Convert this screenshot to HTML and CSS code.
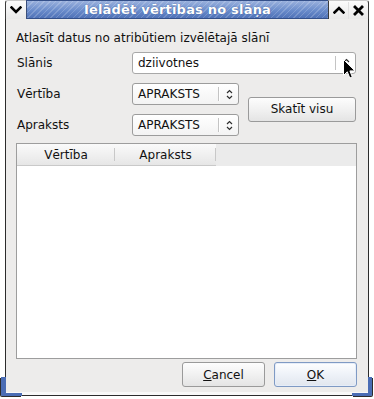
FILE: index.html
```html
<!DOCTYPE html>
<html>
<head>
<meta charset="utf-8">
<link rel="stylesheet" href="styles.css">
</head>
<body>
<div class="screen">
  <div class="window">
    <div class="titlebar">
      <div class="tb-box tb-left">
        <svg width="12" height="8" viewBox="0 0 12 8"><path d="M1.5 1.5 L6 6 L10.5 1.5" fill="none" stroke="#000" stroke-width="2.6" stroke-linecap="square"/></svg>
      </div>
      <div class="tb-title"><span>Ielādēt vērtības no slāņa</span></div>
      <div class="tb-box tb-right">
        <span class="tb-icon"><svg width="12" height="8" viewBox="0 0 12 8"><path d="M1.5 6.5 L6 2 L10.5 6.5" fill="none" stroke="#000" stroke-width="2.6" stroke-linecap="square"/></svg></span>
        <span class="tb-icon"><svg width="11" height="11" viewBox="0 0 11 11"><path d="M2 2 L9 9 M9 2 L2 9" fill="none" stroke="#000" stroke-width="2.8" stroke-linecap="square"/></svg></span>
      </div>
    </div>
    <div class="client">
      <p class="intro">Atlasīt datus no atribūtiem izvēlētajā slānī</p>
      <div class="form">
        <span class="label r1">Slānis</span>
        <div class="combo wide r1">
          <span class="combo-text">dziivotnes</span>
          <span class="combo-sep"></span>
          <span class="combo-arrow"><svg width="7" height="11" viewBox="0 0 7 11"><path d="M1 4 L3.5 1.5 L6 4 M1 7 L3.5 9.5 L6 7" fill="none" stroke="#2e2e2e" stroke-width="1.2"/></svg></span>
        </div>
        <span class="label r2">Vērtība</span>
        <div class="combo r2">
          <span class="combo-text">APRAKSTS</span>
          <span class="combo-sep"></span>
          <span class="combo-arrow"><svg width="7" height="11" viewBox="0 0 7 11"><path d="M1 4 L3.5 1.5 L6 4 M1 7 L3.5 9.5 L6 7" fill="none" stroke="#2e2e2e" stroke-width="1.2"/></svg></span>
        </div>
        <button class="btn show-all">Skatīt visu</button>
        <span class="label r3">Apraksts</span>
        <div class="combo r3">
          <span class="combo-text">APRAKSTS</span>
          <span class="combo-sep"></span>
          <span class="combo-arrow"><svg width="7" height="11" viewBox="0 0 7 11"><path d="M1 4 L3.5 1.5 L6 4 M1 7 L3.5 9.5 L6 7" fill="none" stroke="#2e2e2e" stroke-width="1.2"/></svg></span>
        </div>
      </div>
      <div class="tree">
        <div class="tree-head">
          <div class="col c1">Vērtība</div>
          <div class="col c2">Apraksts</div>
          <div class="col-rest"></div>
        </div>
        <div class="tree-body"></div>
      </div>
      <div class="actions">
        <button class="btn action"><u>C</u>ancel</button>
        <button class="btn action default"><u>O</u>K</button>
      </div>
    </div>
    <div class="frame-bottom"></div>
  </div>
  <span class="corner bl"></span>
  <span class="corner br"></span>
  <svg class="cursor" width="13" height="21" viewBox="0 0 13 21"><path d="M0.5 0.5 L0.5 16.5 L4.3 12.8 L6.8 19 L9.3 18 L6.9 11.9 L12 11.9 Z" fill="#000" stroke="#fff" stroke-width="1"/></svg>
</div>
</body>
</html>
```
FILE: styles.css
```css
html, body {
  margin: 0;
  padding: 0;
  background: #ffffff;
}
.screen {
  position: relative;
  width: 374px;
  height: 399px;
  overflow: hidden;
  font-family: "DejaVu Sans", sans-serif;
  font-size: 12px;
  color: #111;
}
.window {
  margin-left: 5px;
  width: 364px;
  display: flex;
  flex-direction: column;
}
.titlebar {
  height: 19px;
  display: flex;
  background: #f2f2f2;
}
.tb-box {
  background: linear-gradient(#fbfbfb, #e8e8e8);
  display: flex;
  align-items: center;
  justify-content: center;
  border-left: 1px solid #3b3b3b;
  border-top: 1px solid #c8c8c8;
}
.tb-left {
  width: 20px;
  border-radius: 3px 0 0 0;
}
.tb-right {
  width: 39px;
  border-left: 1px solid #3b3b3b;
  border-right: 1px solid #3b3b3b;
  border-radius: 0 3px 0 0;
}
.tb-icon {
  width: 19px;
  display: flex;
  justify-content: center;
  align-items: center;
}
.tb-icon + .tb-icon {
  border-left: 1px solid #e0e0e0;
  height: 17px;
}
.tb-title {
  flex: 1;
  border-left: 1px solid #3b4f7a;
  border-top: 1px solid #34508a;
  border-bottom: 1px solid #34508a;
  background:
    repeating-linear-gradient(135deg, rgba(255,255,255,0.18) 0 1px, rgba(255,255,255,0) 1px 4px),
    linear-gradient(#9ab1dd, #6a8ccb 55%, #4f72b8);
  color: #fff;
  font-weight: bold;
  font-size: 13px;
  display: flex;
  align-items: center;
  justify-content: center;
  letter-spacing: 0.2px;
}
.tb-title span {
  text-shadow: 0 0 1px #2c4a86;
}
.client {
  background: #edeceb;
  border-left: 1px solid #2c2c2c;
  border-right: 1px solid #2c2c2c;
  height: 373px;
  box-sizing: border-box;
  padding: 12px 10px 0 10px;
  display: flex;
  flex-direction: column;
}
.frame-bottom {
  height: 4px;
  box-sizing: border-box;
  background: #f8f8f8;
  border: 1px solid #2c2c2c;
  border-top: none;
  border-radius: 0 0 2px 2px;
}
.intro {
  margin: 0;
  line-height: 14px;
  height: 14px;
}
.form {
  margin-top: 7px;
  display: grid;
  grid-template-columns: 116px 107px 9px 108px;
  grid-template-rows: 22px 22px 22px;
  row-gap: 9px;
  align-items: center;
}
.label {
  grid-column: 1;
  padding-left: 1px;
}
.r1 { grid-row: 1; }
.r2 { grid-row: 2; }
.r3 { grid-row: 3; }
.combo {
  grid-column: 2;
  height: 22px;
  box-sizing: border-box;
  border: 1px solid #9c9c9c;
  border-radius: 3px;
  background: linear-gradient(#ffffff, #f3f3f3);
  display: flex;
  align-items: center;
  padding-left: 5px;
}
.combo.wide {
  grid-column: 2 / 5;
  background: #ffffff;
  border-color: #a8a8a8;
}
.combo-text {
  flex: 1;
  line-height: 14px;
}
.combo-sep {
  width: 1px;
  height: 14px;
  background: #c4c4c4;
  border-right: 1px solid #fff;
}
.combo-arrow {
  width: 18px;
  display: flex;
  justify-content: center;
  align-items: center;
}
.btn {
  font-family: "DejaVu Sans", sans-serif;
  font-size: 12px;
  color: #111;
  box-sizing: border-box;
  border: 1px solid #9a9a9a;
  border-radius: 3px;
  background: linear-gradient(#fdfdfd, #f1f1f1 50%, #e4e4e4);
  padding: 0;
  margin: 0;
}
.show-all {
  grid-column: 4;
  grid-row: 2 / 4;
  height: 25px;
  width: 108px;
  align-self: center;
  margin-top: -1px;
}
.tree {
  margin-top: 7px;
  width: 341px;
  height: 216px;
  box-sizing: border-box;
  border: 1px solid #9d9d9d;
  display: flex;
  flex-direction: column;
}
.tree-head {
  height: 22px;
  display: flex;
  background: #ebebeb;
}
.col {
  box-sizing: border-box;
  height: 22px;
  background: linear-gradient(#fafafa, #eeeeee 60%, #e6e6e6);
  border-bottom: 1px solid #c9c9c9;
  display: flex;
  align-items: center;
  justify-content: center;
  position: relative;
}
.col::after {
  content: "";
  position: absolute;
  right: 0;
  top: 4px;
  bottom: 4px;
  width: 1px;
  background: #c8c8c8;
}
.c1 { width: 98px; }
.c2 { width: 101px; }
.col-rest {
  flex: 1;
  background: #ebebeb;
}
.tree-body {
  flex: 1;
  background: #ffffff;
}
.actions {
  margin-top: 3px;
  display: flex;
  justify-content: flex-end;
  gap: 9px;
  padding-right: 1px;
}
.action {
  width: 83px;
  height: 25px;
}
.action.default {
  border-color: #7f9ac4;
  box-shadow: inset 0 0 0 1px #e6edf8;
  background: linear-gradient(#fdfeff, #eef2f8 50%, #e1e6ee);
}
.corner {
  position: absolute;
  box-sizing: border-box;
  top: 377px;
  height: 19px;
  border-bottom: 3px solid #4a6cb4;
}
.corner.bl {
  left: 1px;
  width: 21px;
  border-left: 5px solid #4a6cb4;
  border-bottom-left-radius: 2px;
  box-shadow: -1px 1px 0 #2c2c2c;
}
.corner.br {
  left: 352px;
  width: 20px;
  border-right: 4px solid #4a6cb4;
  border-bottom-right-radius: 2px;
  box-shadow: 1px 1px 0 #2c2c2c;
}
.cursor {
  position: absolute;
  left: 343px;
  top: 59px;
}
```
